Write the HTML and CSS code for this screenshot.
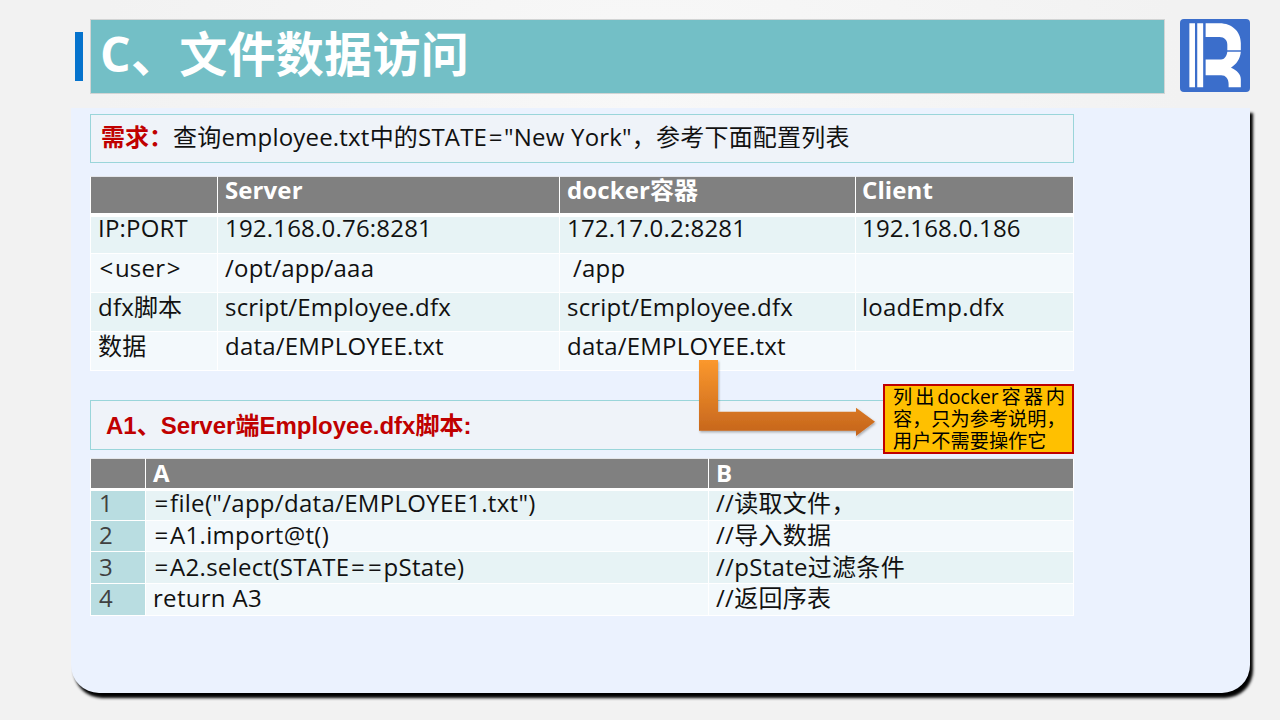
FILE: index.html
```html
<!DOCTYPE html>
<html lang="zh">
<head>
<meta charset="utf-8">
<title>C、文件数据访问</title>
<link rel="stylesheet" href="styles.css">
</head>
<body>
<div class="slide">
  <header class="top">
    <span class="accent"></span>
    <h1 class="title">C、文件数据访问</h1>
    <svg class="logo" viewBox="0 0 71 74" aria-label="logo">
      <rect width="71" height="74" rx="4" fill="#3b6ecb"/>
      <path fill="#fff" d="M9.500 4.300h5.700v65H9.500zM17.500 4.300h6v65h-6z"/>
      <path fill="#fff" d="M26 4.300H40C53 4.300 61.700 13 61.700 24.300V31.700H48V26C48 21.500 45 18.300 40 18.300H26z"/>
      <path fill="#fff" d="M48 33.200H61.700C61 41 57 46 51.700 49.300C58 52 61.700 56 61.700 61V69.300H49.300V66C49.300 60.500 46.500 57 41.700 57H26V41H41.700C45 41 47.300 38 48 33.200z"/>
    </svg>
  </header>
  <main class="panel">
    <p class="note"><strong>需求：</strong>查询employee.txt中的STATE<span class="sym">=</span>"New York"，参考下面配置列表</p>
    <table class="grid config">
      <colgroup><col class="c1"><col class="c2"><col class="c3"><col class="c4"></colgroup>
      <thead>
        <tr><th></th><th>Server</th><th>docker容器</th><th>Client</th></tr>
      </thead>
      <tbody>
        <tr><td>IP:PORT</td><td>192.168.0.76:8281</td><td>172.17.0.2:8281</td><td>192.168.0.186</td></tr>
        <tr><td><span class="sym">&lt;</span>user<span class="sym">&gt;</span></td><td>/opt/app/aaa</td><td class="nudge">/app</td><td></td></tr>
        <tr><td>dfx脚本</td><td>script/Employee.dfx</td><td>script/Employee.dfx</td><td>loadEmp.dfx</td></tr>
        <tr><td>数据</td><td>data/EMPLOYEE.txt</td><td>data/EMPLOYEE.txt</td><td></td></tr>
      </tbody>
    </table>
    <p class="section">A1、Server端Employee.dfx脚本:</p>
    <table class="grid script">
      <colgroup><col class="s1"><col class="s2"><col class="s3"></colgroup>
      <thead>
        <tr><th></th><th>A</th><th>B</th></tr>
      </thead>
      <tbody>
        <tr><td class="num">1</td><td><span class="sym">=</span>file("/app/data/EMPLOYEE1.txt")</td><td>//读取文件，</td></tr>
        <tr><td class="num">2</td><td><span class="sym">=</span>A1.import@t()</td><td>//导入数据</td></tr>
        <tr><td class="num">3</td><td><span class="sym">=</span>A2.select(STATE<span class="sym">=</span><span class="sym">=</span>pState)</td><td>//pState过滤条件</td></tr>
        <tr><td class="num">4</td><td>return A3</td><td>//返回序表</td></tr>
      </tbody>
    </table>
    <svg class="arrow" viewBox="0 0 180 80" aria-hidden="true">
      <defs>
        <linearGradient id="arrowFill" x1="0" y1="0" x2="0" y2="1">
          <stop offset="0" stop-color="#fb982d"/>
          <stop offset="1" stop-color="#c4641c"/>
        </linearGradient>
        <filter id="arrowShadow" x="-5%" y="-5%" width="115%" height="115%">
          <feDropShadow dx="1" dy="1.500" stdDeviation="1.200" flood-color="#000" flood-opacity=".3"/>
        </filter>
      </defs>
      <path fill="url(#arrowFill)" filter="url(#arrowShadow)" d="M1 0H20V51.700H158V47.700L177 61.700L158 76V70.700H1z"/>
    </svg>
    <p class="callout"><span class="line fill">列出docker容器内</span><span class="line">容，只为参考说明，</span><span class="line">用户不需要操作它</span></p>
  </main>
</div>
</body>
</html>
```
FILE: styles.css
```css
* { box-sizing: border-box; }
html, body { margin: 0; padding: 0; }
body {
  width: 1280px;
  height: 720px;
  overflow: hidden;
  font-family: "Open Sans", "Noto Sans CJK SC", sans-serif;
  color: #111;
}
.slide {
  width: 1280px;
  height: 720px;
  display: flex;
  flex-direction: column;
  background: radial-gradient(ellipse at 50% 15%, #f8f8f8 0%, #f2f2f2 60%);
}
.top {
  display: flex;
  align-items: center;
  padding: 19px 0 0 75px;
}
.accent {
  width: 8px;
  height: 49px;
  background: #0573cd;
  margin-right: 7px;
}
.title {
  width: 1075px;
  height: 75px;
  margin: 0 15px 0 0;
  padding: 0 0 0 9px;
  background: #73bfc6;
  border: 1px solid #d2d4d4;
  color: #fff;
  font-size: 48px;
  font-weight: 700;
  line-height: 68px;
  letter-spacing: .3px;
}
.logo { width: 70px; height: 73px; align-self: flex-start; }
.panel {
  position: relative;
  width: 1179px;
  height: 585px;
  margin: 14px 0 0 71px;
  padding: 6px 0 0 19px;
  background: #ebf2fe;
  border-radius: 0 0 28px 28px;
  box-shadow: 3px 5px 3px #000;
}
.note, .section {
  width: 984px;
  margin: 0;
  background: #eff3f9;
  border: 1px solid #9ad5da;
}
.note {
  height: 49px;
  padding-left: 10px;
  font-size: 24px;
  line-height: 43px;
  letter-spacing: .2px;
}
.note strong { color: #c00000; font-weight: 700; letter-spacing: 0; }
.sym { margin: 0 1.500px; }
.section {
  height: 50px;
  margin-top: 29px;
  padding-left: 15px;
  font-family: "Liberation Sans", "Noto Sans CJK SC", sans-serif;
  font-size: 24px;
  font-weight: 700;
  line-height: 49px;
  color: #c00000;
}
.grid {
  width: 984px;
  table-layout: fixed;
  border-collapse: separate;
  border-spacing: 0;
  font-size: 24px;
}
.config { margin-top: 13px; letter-spacing: .2px; }
.script { margin-top: 8px; letter-spacing: .3px; }
.c1 { width: 128px; } .c2 { width: 342px; } .c3 { width: 296px; } .c4 { width: 218px; }
.s1 { width: 56px; } .s2 { width: 563px; } .s3 { width: 365px; }
.grid th, .grid td {
  padding: 0 0 0 7px;
  text-align: left;
  border-right: 1px solid #fff;
  white-space: nowrap;
}
.grid th:first-child, .grid td:first-child { border-left: 1px solid #fff; }
.grid th {
  background: #808080;
  background-clip: padding-box;
  color: #fff;
  font-weight: 700;
  letter-spacing: .1px;
  vertical-align: top;
  border-top: 1px solid #e4e6ea;
}
.grid tbody tr:nth-child(odd) td { background: #e7f3f5; }
.grid tbody tr:nth-child(even) td { background: #f3f9fc; }
.grid td { border-bottom: 1px solid #fff; vertical-align: top; }
.config th { height: 41px; line-height: 25px; border-bottom: 4px solid #fff; }
.config td { height: 39px; line-height: 27px; }
.config tbody tr:first-child td { height: 37px; line-height: 21px; }
.config th:last-child, .config td:last-child { padding-left: 6px; }
.script th { height: 33px; line-height: 28px; border-bottom: 3px solid #fff; }
.script td { height: 32px; line-height: 28px; }
.script tbody tr:nth-child(1) td { height: 30px; line-height: 24px; }
.script tbody tr:nth-child(2) td { height: 31px; }
.script tbody tr:nth-child(3) td { line-height: 30px; }
.grid tbody tr td.num { background: #b9dde1; color: #404040; padding-left: 8px; }
.grid td.nudge { padding-left: 13px; }
.arrow {
  position: absolute;
  left: 627px;
  top: 252px;
  width: 180px;
  height: 80px;
}
.callout {
  position: absolute;
  left: 812px;
  top: 276px;
  width: 191px;
  height: 70px;
  margin: 0;
  padding: 0 7px 0 8px;
  background: #ffc000;
  border: 2px solid #c00000;
  font-size: 19.200px;
  line-height: 22px;
  color: #000;
}
.line { display: block; white-space: nowrap; }
.fill { text-align: justify; text-align-last: justify; white-space: normal; }
```
